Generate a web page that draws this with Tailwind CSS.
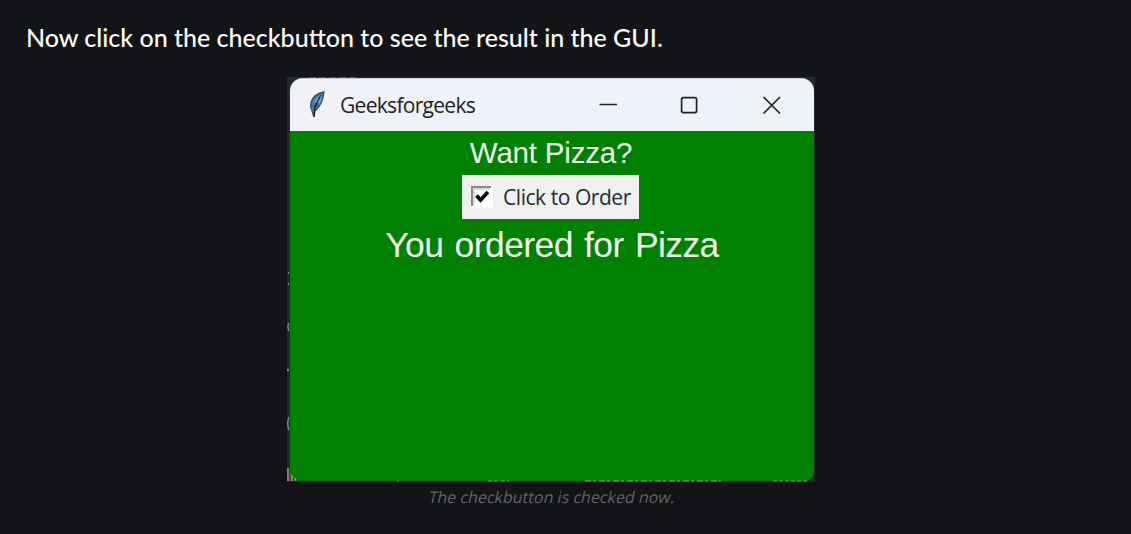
<!DOCTYPE html>
<html lang="en">
<head>
<meta charset="utf-8">
<title>Checkbutton result</title>
<script src="https://cdn.jsdelivr.net/npm/@tailwindcss/browser@4"></script>
</head>
<body class="bg-[#131418] h-[534px] overflow-hidden font-['Lato',sans-serif]">
<main class="flex flex-col">
  <p class="mt-[19px] ml-[26px] h-9 leading-9 text-[25px] font-medium text-white whitespace-nowrap"><span>Now click on the checkbutton to see the result in the GUI.</span></p>
  <figure class="ml-[287px] mt-[22px] w-[528px] flex flex-col items-center">
    <div class="relative w-[528px] h-[405px] bg-[#28292e] pt-px pl-[3px] pr-px pb-px">
      <section class="w-[524px] h-[403px] rounded-t-[13px] rounded-b-[9px] overflow-hidden bg-[#008000] flex flex-col items-center">
        <header class="w-full h-[53px] shrink-0 bg-linear-to-r from-[#f1f2f8] via-[#eef2fa] via-30% to-[#eef3f8] border-t border-[#c9cccf] flex items-center">
          <svg class="ml-[17px] w-5 h-7 shrink-0" viewBox="0 0 20 28">
            <path d="M17 1C11 2 6 6 4 11c-1 4 0 7 1 9l2 6 1-6c5-4 8-9 9-19Z" fill="#3f78ad" stroke="#4a4f56" stroke-width="1.3"/>
            <path d="M15 3C11 5 9 7 7 12l3-1-4 6 7-5c2-3 2-5 2-9Z" fill="#6aa5dc"/>
            <path d="M14 4 8 15 7 26M11 12l-4 6" fill="none" stroke="#20262e" stroke-width="1.3"/>
          </svg>
          <h1 class="ml-[13px] w-[140px] font-['Open_Sans',sans-serif] text-[21px] leading-7 tracking-[-0.7px] text-[#202124] whitespace-nowrap"><span>Geeksforgeeks</span></h1>
          <svg class="ml-[119px] w-[182px] h-7 shrink-0" viewBox="0 0 182 28" fill="none" stroke="#202124" stroke-width="1.5">
            <path d="M0.5 13.6h17.5"/>
            <rect x="82.6" y="6.6" width="15" height="15" rx="1.8" stroke-width="1.7"/>
            <path d="m164.500 6 16.500 16.500M181 6 164.500 22.500" stroke-width="1.7"/>
          </svg>
        </header>
        <p class="mt-[4px] mr-[2px] h-9 leading-9 font-['Liberation_Sans',sans-serif] text-[29.5px] tracking-[-0.2px] text-[#f4f7f0] whitespace-nowrap"><span>Want Pizza?</span></p>
        <label class="mt-[4px] mr-[3px] w-[177px] h-[44px] bg-[#f0f0f0] flex items-center whitespace-nowrap">
          <svg class="ml-[9px] w-[22px] h-[22px] shrink-0" viewBox="0 0 22 22">
            <path d="M0 0h22v22H0z" fill="#fff"/>
            <path d="M1 20V1h19" fill="none" stroke="#898989" stroke-width="2"/>
            <path d="M3 19V3h16" fill="none" stroke="#b8b8b8" stroke-width="1"/>
            <path d="m5.500 9.500 4 4.500 7.500-8" fill="none" stroke="#000" stroke-width="3.6"/>
          </svg>
          <span class="ml-[10px] font-['Open_Sans',sans-serif] text-[21px] leading-7 tracking-[-0.45px] text-[#282838]">Click to Order</span>
        </label>
        <p class="mt-[5px] h-[42px] leading-[42px] font-['Liberation_Sans',sans-serif] text-[35.500px] tracking-[-0.6px] [word-spacing:2px] text-[#f4f7f0] whitespace-nowrap"><span>You ordered for Pizza</span></p>
      </section>
      <!-- slivers of the desktop showing round the window's edge -->
      <svg class="absolute inset-0 w-[528px] h-[405px]" viewBox="0 0 528 405" fill="none">
        <path d="M1 196h1M1 207h1M0 293h2" stroke="#aaa" stroke-width="1.5"/>
        <path d="M2 246q-2 4 0 8M2 340q-2.500 6 0 13" stroke="#6f91ad" stroke-width="1.3"/>
        <path d="M1 391v13M5 398v6M8 401v3" stroke="#b4a9a5" stroke-width="1.3"/>
        <path d="M3 396v8" stroke="#a75b32"/>
        <path d="M110 404h2M201 404h9M214 404h8M486 404h36" stroke="#8a8a88" stroke-dasharray="4 2"/>
        <path d="M298 404h136" stroke="#9a9b98" stroke-dasharray="6 2 3 3"/>
        <path d="M22 .5h50" stroke="#625b53" stroke-dasharray="7 3"/>
      </svg>
    </div>
    <figcaption class="ml-[2px] mt-[3px] h-6 leading-6 text-[16px] text-[#626366] font-['Open_Sans',sans-serif] whitespace-nowrap"><span class="inline-block -skew-x-12">The checkbutton is checked now.</span></figcaption>
  </figure>
</main>
</body>
</html>
